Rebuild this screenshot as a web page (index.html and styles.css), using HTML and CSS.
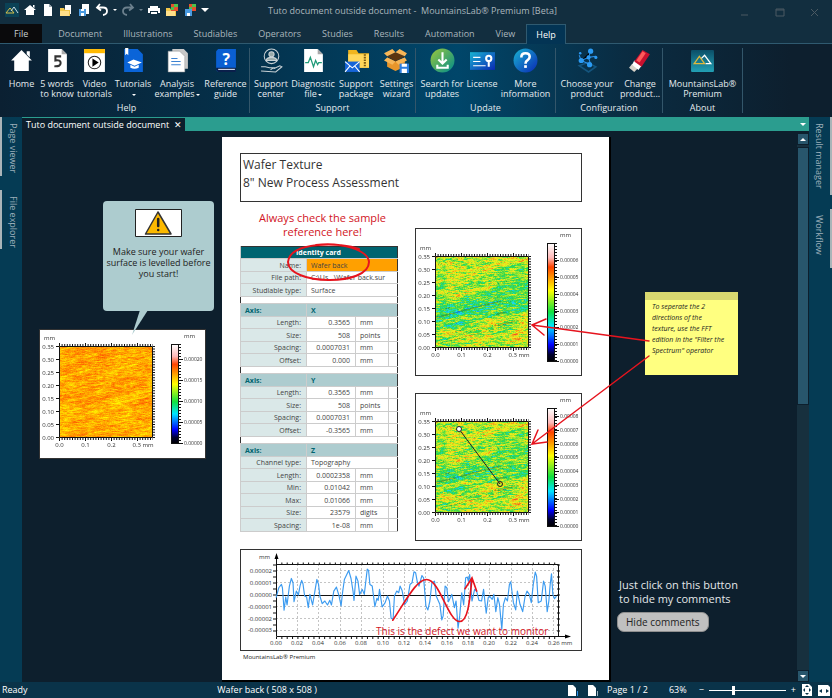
FILE: index.html
```html
<!doctype html>
<html lang="en">
<head>
	<meta charset="utf-8">
	<meta name="viewport" content="width=device-width, initial-scale=1.0">
	<title>Tuto document outside document - MountainsLab® Premium [Beta]</title>
	<link rel="stylesheet" href="styles.css">
</head>

<body>

	<svg class="defs" width="0" height="0" aria-hidden="true">
		<defs>
			<linearGradient id="scale" x1="0" y1="1" x2="0" y2="0">
				<stop offset="0" stop-color="#000"/>
				<stop offset=".06" stop-color="#000030"/>
				<stop offset=".14" stop-color="#0000ff"/>
				<stop offset=".3" stop-color="#00e5ff"/>
				<stop offset=".42" stop-color="#10e040"/>
				<stop offset=".6" stop-color="#ffff00"/>
				<stop offset=".8" stop-color="#ff4400"/>
				<stop offset=".88" stop-color="#ffb9b9"/>
				<stop offset="1" stop-color="#fff"/>
			</linearGradient>
			<linearGradient id="green" x1="0" y1="0" x2="1" y2="1"><stop offset="0" stop-color="#9bc83c"/><stop offset="1" stop-color="#008c8c"/></linearGradient>
			<linearGradient id="blue" x1="0" y1="0" x2="1" y2="1"><stop offset="0" stop-color="#19b4d2"/><stop offset="1" stop-color="#0a28b4"/></linearGradient>
			<linearGradient id="teal" x1="0" y1="0" x2="0" y2="1"><stop offset="0" stop-color="#0b4f68"/><stop offset="1" stop-color="#22a0b4"/></linearGradient>
		</defs>
	</svg>

	<header class="titlebar">
		<div class="quick">
			<svg class="qi" viewBox="0 0 14 14"><path fill="#0b4256" d="M0 0h14v14H0z"/><path fill="none" stroke="#d8c14a" d="M1 10l4-5 4 5z"/><path fill="none" stroke="#cfe0e6" d="M6 8l3-4 4 6"/></svg>
			<button title="Home"><svg class="qi" viewBox="0 0 14 14"><path fill="#fff" d="M7 2l6 5h-2v5H3V7H1zM10 2h1.500v3L10 4z"/></svg></button>
			<button title="New"><svg class="qi" viewBox="0 0 14 14"><path fill="#fff" d="M3 1h5l3 3v9H3z"/><path fill="#9aa7af" d="M8 1l3 3H8z"/></svg></button>
			<button title="Open"><svg class="qi" viewBox="0 0 14 14"><path fill="#fff" d="M6 2h6v9H6z"/><path fill="#f2c84b" d="M1 5h4l1 2h5v6H1z"/><path fill="#ffe08a" d="M1 8h9v5H1z"/></svg></button>
			<button title="Save"><svg class="qi" viewBox="0 0 14 14"><path fill="#fff" d="M5 1h7v10H5z"/><path fill="#4a9be0" d="M2 6h7v7H2z"/><path fill="#fff" d="M4 10h3v3H4zM4 6h3v2H4z"/></svg></button>
			<button title="Undo"><svg class="qi" viewBox="0 0 14 14"><path fill="none" stroke="#fff" stroke-width="1.800" d="M5 1L2 4.500l4 3M2.500 4.500H8q4 0 4 3.500T8 12"/></svg></button>
			<i class="caret"></i>
			<button title="Redo"><svg class="qi" viewBox="0 0 14 14"><path fill="none" stroke="#6c808d" stroke-width="1.800" d="M9 1l3 3.500-4 3M11.500 4.500H6q-4 0-4 3.500t4 4"/></svg></button>
			<i class="caret dim"></i>
			<button title="Print"><svg class="qi" viewBox="0 0 14 14"><path fill="#fff" d="M3 3h8v2H3zM1 5h12v5h-2V8H3v2H1zM4 9h6v2H4z"/></svg></button>
			<button title="Load template"><svg class="qi" viewBox="0 0 14 14"><path fill="#f2c84b" d="M1 5h4l1 2h5v6H1z"/><path fill="#e7502c" d="M6 1h7v7H6z"/><path fill="#4fc24a" d="M9 1h4v3H9zM6 4h3v3H6z"/><path fill="#ffe08a" d="M1 8h9v5H1z"/></svg></button>
			<button title="Save template"><svg class="qi" viewBox="0 0 14 14"><path fill="#e7502c" d="M6 1h7v7H6z"/><path fill="#4fc24a" d="M9 1h4v3H9zM6 4h3v3H6z"/><path fill="#4a9be0" d="M2 6h7v7H2z"/><path fill="#fff" d="M4 10h3v3H4z"/></svg></button>
			<i class="caret more"></i>
		</div>
		<div class="caption">Tuto document outside document -&nbsp; MountainsLab® Premium [Beta]</div>
		<div class="winbtns">
			<button title="Minimize"><svg viewBox="0 0 10 10"><path d="M1 8h7"/></svg></button>
			<button title="Maximize"><svg viewBox="0 0 10 10"><path d="M1 2h8v7H1zM1 3h8"/></svg></button>
			<button title="Close"><svg viewBox="0 0 10 10"><path d="M1 2l7 7M8 2L1 9"/></svg></button>
		</div>
	</header>

	<nav class="menu">
		<a href="#" class="file">File</a>
		<a href="#">Document</a>
		<a href="#">Illustrations</a>
		<a href="#">Studiables</a>
		<a href="#">Operators</a>
		<a href="#">Studies</a>
		<a href="#">Results</a>
		<a href="#">Automation</a>
		<a href="#">View</a>
		<a href="#" class="active">Help</a>
	</nav>

	<div class="ribbon">
		<section class="group g-help">
			<div class="tools">
				<button><svg viewBox="0 0 24 24"><path fill="#fff" d="M12 2l10 10h-3v10H5V12H2zM17 3h3v6l-3-3z"/></svg><span>Home</span></button>
				<button><svg viewBox="0 0 24 24"><path fill="#fff" d="M3 1h13l5 5v17H3z"/><path fill="#a9a9a9" d="M16 1l5 5h-5z"/><path fill="none" stroke="#333" stroke-width="2" d="M15.500 8H10v4q5-1 5 2.500T9 17.500"/></svg><span>5 words<br>to know</span></button>
				<button><svg viewBox="0 0 24 24"><path fill="#fff" d="M2 1h20v22H2z"/><path fill="#ffb900" d="M2 1h20v4H2z"/><circle cx="12" cy="14" r="6" fill="none" stroke="#222"/><path d="M10 10l6 4-6 4z"/></svg><span>Video<br>tutorials</span></button>
				<button><svg viewBox="0 0 24 24"><path fill="#0a64d8" d="M3 1h13l5 5v17H3z"/><path fill="#fff" d="M4 0h3v7l-1.500-1.500L4 7zM6 14l6-3 8 3-7 3zM9 16l4 2 4-2v3q-4 2-8 0z"/></svg><span>Tutorials<br><i class="caret"></i></span></button>
				<button><svg viewBox="0 0 24 24"><path fill="#c8c8c8" d="M7 1h11l4 4v15H7z"/><path fill="#fff" stroke="#999" stroke-width=".5" d="M3 3h11l5 5v15H3z"/><path stroke="#3c82d2" d="M6 10h6M6 13h9M6 16h9"/></svg><span>Analysis<br>examples<i class="caret"></i></span></button>
				<button><svg viewBox="0 0 24 24"><path fill="#0a5fd2" d="M5 1h17v22H5l-2-2V3z"/><path fill="#0a1f4a" d="M3 19h19v4H5l-2-2z"/><path fill="#e8f0ff" d="M5 20h16v1H5z"/><text x="9" y="16" font-size="15" font-weight="700" fill="#fff">?</text></svg><span>Reference<br>guide</span></button>
			</div>
			<h2>Help</h2>
		</section>
		<section class="group g-support">
			<div class="tools">
				<button><svg viewBox="0 0 24 24"><g fill="none" stroke="#c9d2d6"><circle cx="12" cy="8" r="7"/><circle cx="12" cy="6" r="2.500" fill="#9aa"/><path fill="#9aa" d="M7 12q0-3 5-3t5 3z"/><path d="M2 18h4l4 1h4l-3 2M14 20l6-3 2 1-6 5-14-1"/></g></svg><span>Support<br>center</span></button>
				<button><svg viewBox="0 0 24 24"><path fill="#fff" d="M3 1h13l5 5v17H3z"/><path fill="#a9a9a9" d="M16 1l5 5h-5z"/><path fill="none" stroke="#1f9a78" stroke-width="1.200" d="M4 14h3l2-5 3 9 2-6 2 4 1-2h3"/></svg><span>Diagnostic<br>file<i class="caret"></i></span></button>
				<button><svg viewBox="0 0 24 24"><path fill="#f0b51e" d="M4 2h8l2 3h10v14H4z"/><path fill="#ffd75a" d="M4 6h20v13H4z"/><path stroke="#7a5a10" stroke-width="2" stroke-dasharray="1.500 1" d="M20 6v12"/><path fill="#1665d8" d="M1 13h14v10H1z"/><path fill="none" stroke="#fff" d="M1 13l7 6 7-6M1 23l5-6M15 23l-5-6"/></svg><span>Support<br>package</span></button>
				<button><svg viewBox="0 0 24 24"><path fill="#e9962b" d="M3 9l8 4v9l-8-4zM11 13l9-4v9l-9 4z"/><path fill="#5a3510" d="M3 8l8-4 9 4-9 5z"/><path fill="#f7b657" d="M3 8L0 5l8-4 3 3zM20 8l2-3-7-4-4 3zM3 9l8 4-3 3-8-4zM20 9l-9 4 3 3 8-4z"/><path fill="#2a7de0" d="M15 15h9v9h-9z"/><path fill="#fff" d="M17 15h5v3h-5zM17 20h5v4h-5z"/></svg><span>Settings<br>wizard</span></button>
			</div>
			<h2>Support</h2>
		</section>
		<section class="group g-update">
			<div class="tools">
				<button><svg viewBox="0 0 24 24"><circle cx="12" cy="12" r="11.500" fill="url(#green)"/><path fill="none" stroke="#fff" stroke-width="2" d="M12 4v11M8 11l4 4 4-4M7 16v3h10v-3"/></svg><span>Search for<br>updates</span></button>
				<button><svg viewBox="0 0 24 24"><path fill="url(#blue)" d="M0 4h24v17H0z"/><path stroke="#fff" d="M3 9h7M3 13h7M3 17h12"/><g fill="none" stroke="#fff" stroke-width="2"><circle cx="18" cy="10" r="2.500"/><path d="M18 12v6"/></g></svg><span>License</span></button>
				<button><svg viewBox="0 0 24 24"><circle cx="12" cy="12" r="11.500" fill="url(#blue)"/><path fill="none" stroke="#fff" stroke-width="2.500" d="M8 9q0-4 4-4t4 3.500q0 2-2 3.200t-2 3.300"/><path fill="#fff" d="M10.700 16.500h2.600v2.600h-2.600z"/></svg><span>More<br>information</span></button>
			</div>
			<h2>Update</h2>
		</section>
		<section class="group g-config">
			<div class="tools">
				<button><svg viewBox="0 0 24 24"><path fill="none" stroke="#14557e" stroke-width="1.500" d="M4 17l8-3 8 4-7 5z"/><path stroke="#2b8fe8" d="M6 12l7-3 2-6M13 9l7-1M13 9l2 7M6 12L4 7M6 12l9 4"/><g fill="#2b9bf4"><circle cx="6" cy="12" r="2.500"/><circle cx="15" cy="3" r="2.500"/><circle cx="13" cy="9" r="2"/><circle cx="20" cy="9" r="1.500"/><circle cx="14" cy="16" r="2.500"/><circle cx="5" cy="5" r="1.200"/></g></svg><span>Choose your<br>product</span></button>
				<button><svg viewBox="0 0 24 24"><path fill="#d7d2c8" d="M4 15l6 4-4 4-5-4z"/><path fill="#fff" d="M6 12l7 5-3 4-6-5z"/><path fill="#c8102e" d="M14 2l7 4-8 12-7-5z"/><path fill="#ff5a5a" d="M14 3l3 2-6 9-3-2z"/></svg><span>Change<br>product...</span></button>
			</div>
			<h2>Configuration</h2>
		</section>
		<section class="group g-about">
			<div class="tools">
				<button><svg viewBox="0 0 24 24"><rect x="1" y="2" width="22" height="21" rx="1" fill="url(#teal)"/><path fill="none" stroke="#e0b93c" stroke-width="1.200" d="M4 15l5-7 5 7z"/><path fill="none" stroke="#fff" stroke-width="1.200" d="M11 10l3-3 6 8h-5"/></svg><span>MountainsLab®<br>Premium</span></button>
			</div>
			<h2>About</h2>
		</section>
	</div>

	<div class="workspace">
		<aside class="dock left">
			<button>Page viewer</button>
			<button>File explorer</button>
		</aside>

		<main class="center">
			<div class="doctabs">
				<div class="doctab">Tuto document outside document <button title="Close tab">✕</button></div>
				<i class="caret"></i>
			</div>
			<div class="stage">
				<div class="paper">
					<div class="title-box">Wafer Texture<br>8" New Process Assessment</div>

					<div class="columns">
						<div class="identity">
							<p class="remark">Always check the sample<br>reference here!</p>
							<table>
								<colgroup><col class="c-label"><col class="c-value"><col class="c-unit"><col></colgroup>
								<tr class="head"><th colspan="4">Identity card</th></tr>
								<tr class="name"><th>Name:</th><td colspan="3">Wafer back</td></tr>
								<tr><th>File path:</th><td colspan="3">C:\Us...\Wafer back.sur</td></tr>
								<tr><th>Studiable type:</th><td colspan="3">Surface</td></tr>
								<tr class="gap"><td colspan="4"></td></tr>
								<tr class="axis"><th>Axis:</th><td colspan="3">X</td></tr>
								<tr><th>Length:</th><td class="num">0.3565</td><td>mm</td><td></td></tr>
								<tr><th>Size:</th><td class="num">508</td><td>points</td><td></td></tr>
								<tr><th>Spacing:</th><td class="num">0.0007031</td><td>mm</td><td></td></tr>
								<tr><th>Offset:</th><td class="num">0.000</td><td>mm</td><td></td></tr>
								<tr class="gap"><td colspan="4"></td></tr>
								<tr class="axis"><th>Axis:</th><td colspan="3">Y</td></tr>
								<tr><th>Length:</th><td class="num">0.3565</td><td>mm</td><td></td></tr>
								<tr><th>Size:</th><td class="num">508</td><td>points</td><td></td></tr>
								<tr><th>Spacing:</th><td class="num">0.0007031</td><td>mm</td><td></td></tr>
								<tr><th>Offset:</th><td class="num">-0.3565</td><td>mm</td><td></td></tr>
								<tr class="gap"><td colspan="4"></td></tr>
								<tr class="axis"><th>Axis:</th><td colspan="3">Z</td></tr>
								<tr><th>Channel type:</th><td colspan="3">Topography</td></tr>
								<tr><th>Length:</th><td class="num">0.0002358</td><td>mm</td><td></td></tr>
								<tr><th>Min:</th><td class="num">0.01042</td><td>mm</td><td></td></tr>
								<tr><th>Max:</th><td class="num">0.01066</td><td>mm</td><td></td></tr>
								<tr><th>Size:</th><td class="num">23579</td><td>digits</td><td></td></tr>
								<tr><th>Spacing:</th><td class="num">1e-08</td><td>mm</td><td></td></tr>
							</table>
						</div>

						<div class="maps">
							<figure class="map">
								<canvas width="93" height="92" data-base="0.54" data-band="0.13" data-seed="7"></canvas>
								<svg viewBox="0 0 165 146" data-ticks="0.00000 0.00001 0.00002 0.00003 0.00004 0.00005 0.00006" data-top="31"></svg>
							</figure>
							<figure class="map">
								<canvas width="93" height="92" data-base="0.54" data-band="0.09" data-seed="7"></canvas>
								<svg viewBox="0 0 165 146" data-ticks="0.00000 0.00001 0.00002 0.00003 0.00004 0.00005 0.00006 0.00007 0.00008" data-top="22">
									<path stroke="#222" d="M43 35l41 55"/>
									<circle cx="43" cy="35" r="2.500" fill="#fff" stroke="#222"/>
									<circle cx="84" cy="90" r="2.500" fill="none" stroke="#222"/>
								</svg>
							</figure>
						</div>
					</div>

					<figure class="profile">
						<svg viewBox="0 0 340 100">
							<g stroke="#c4c4c4" stroke-dasharray="2 2">
								<path d="M35 20.500h282M35 32.500h282M35 56.500h282M35 68.500h282M35 80.500h282"/>
								<path d="M56.500 14v72M77.500 14v72M99.500 14v72M120.500 14v72M142.500 14v72M163.500 14v72M184.500 14v72M206.500 14v72M227.500 14v72M248.500 14v72M270.500 14v72M291.500 14v72M312.500 14v72"/>
							</g>
							<path stroke="#111" stroke-width="2" stroke-dasharray="1 4.350" d="M35 13.500h282M35 88h282"/>
							<path stroke="#111" stroke-width="3" stroke-dasharray="1 5" d="M317.500 14.500v72M33.500 14.500v72"/>
							<path fill="none" stroke="#111" d="M35.500 8v78.500H325M35 14.500h282.500v72M35 45.500h283"/>
							<path d="M35.500 3l2 6h-4zM330 86.500l-6-2v4z"/>
							<svg width="342" height="102" viewBox="30 27 1026 306">
								<polyline fill="none" stroke="#3c9bf0" stroke-width="3.500" stroke-linejoin="round" points="136,170 144,140 152,130 155,140 160,208 165,168 169,192 176,135 182,112 187,125 190,182 197,150 203,162 208,135 213,118 217,128 222,165 228,168 233,200 238,160 246,192 253,150 259,115 264,130 268,165 275,188 283,180 291,192 298,178 303,192 310,150 318,138 326,165 332,195 337,150 342,115 355,88 362,112 368,150 371,178 377,105 383,120 388,160 396,145 402,160 411,84 415,88 419,130 426,135 434,197 440,172 444,178 448,145 456,198 465,185 472,165 478,180 483,232 489,235 493,165 500,150 506,155 510,135 516,148 524,190 532,180 540,130 546,125 552,92 557,95 562,122 567,135 576,103 581,110 588,195 594,207 600,180 606,125 614,120 619,165 630,190 636,237 640,225 646,135 651,140 656,182 666,160 674,200 679,180 685,262 690,225 696,155 702,192 708,110 713,108 716,120 720,100 727,180 735,145 741,150 748,178 756,180 762,145 770,217 776,170 780,165 788,175 793,160 799,212 805,170 810,190 817,265 822,190 828,170 834,180 840,130 844,122 852,185 859,207 864,150 872,190 880,212 887,168 893,150 900,160 906,185 912,130 918,93 922,105 927,185 936,180 943,120 948,135 954,212 959,180 963,130 967,98 971,160 976,173 982,165"/>
								<g class="red"><path d="M488 238C530 175 560 115 590 115C630 115 655 242 690 242C715 242 720 180 727 112M706 143l21-33 14 40" stroke-width="5"/></g>
							</svg>
							<g class="tick" text-anchor="end">
								<text x="29" y="9">mm</text>
								<text x="31" y="23">0.00002</text><text x="31" y="35">0.00001</text><text x="31" y="47">0.00000</text>
								<text x="31" y="59">-0.00001</text><text x="31" y="71">-0.00002</text><text x="31" y="82">-0.00003</text>
							</g>
							<g class="tick" text-anchor="middle">
								<text x="35" y="95">0.00</text><text x="56" y="95">0.02</text><text x="77" y="95">0.04</text><text x="99" y="95">0.06</text>
								<text x="120" y="95">0.08</text><text x="142" y="95">0.10</text><text x="163" y="95">0.12</text><text x="184" y="95">0.14</text>
								<text x="206" y="95">0.16</text><text x="227" y="95">0.18</text><text x="248" y="95">0.20</text><text x="270" y="95">0.22</text>
								<text x="291" y="95">0.24</text><text x="319" y="95">0.26 mm</text>
							</g>
							<text class="defect" x="135" y="85">This is the defect we want to monitor</text>
						</svg>
					</figure>
					<footer>MountainsLab® Premium</footer>

					<!-- comments pinned around the page -->
					<figure class="map side">
						<canvas width="93" height="92" data-base="0.69" data-band="0" data-seed="3"></canvas>
						<svg viewBox="0 0 165 128" data-ticks="0.00000 0.00005 0.00010 0.00015 0.00020" data-top="29"></svg>
					</figure>
					<div class="bubble">
						<svg viewBox="0 0 47 28"><path fill="#fff" stroke="#222" d="M.5.500h46v27H.500z"/><path fill="#fcb900" stroke="#333" stroke-width="1.500" stroke-linejoin="round" d="M23 3L10.500 25h25.500z"/><path stroke="#222" stroke-width="2.500" stroke-linecap="round" d="M23.200 10v7M23.200 21v.100"/></svg>
						<p>Make sure your wafer surface is levelled before you start!</p>
						<svg class="tail" viewBox="0 0 18 26"><path fill="#adcccf" d="M9 0h8L1 25z"/></svg>
					</div>
					<div class="note"><p>To seperate the 2<br>directions of the<br>texture, use the FFT<br>edition in the "Filter the<br>Spectrum" operator</p></div>
					<div class="hide">
						<p>Just click on this button<br>to hide my comments</p>
						<button>Hide comments</button>
					</div>
					<svg class="ink red" viewBox="0 0 387 543" aria-hidden="true">
						<path stroke-width="2" d="M137 112C120 105 68 104 66 125C66 148 147 150 147 125C146 113 120 105 94 108"/>
						<path d="M427 204L310 188M324 182l-14 6 12 10"/>
						<path d="M427 219L310 307M316 293l-6 14 15-2"/>
					</svg>
				</div>
				<div class="scrollbar">
					<button title="Scroll up"><i class="caret up"></i></button>
					<div class="thumb"></div>
					<button title="Scroll down"><i class="caret"></i></button>
				</div>
			</div>
		</main>

		<aside class="dock right">
			<button>Result manager</button>
			<button>Workflow</button>
		</aside>
	</div>

	<div class="status">
		<span>Ready</span>
		<span>Wafer back ( 508 x 508 )</span>
		<div class="pager">
			<button title="Previous page"><svg viewBox="0 0 12 12"><path fill="#fff" d="M1 1h5l3 3v8H1z"/><path stroke="#2b8fe8" d="M10.500 7v5"/></svg></button>
			<button title="Next page"><svg viewBox="0 0 12 12"><path fill="#fff" d="M1 1h5l3 3v8H1z"/><path stroke="#9fb4c0" d="M10.500 7v5"/></svg></button>
			<span>Page 1 / 2</span>
		</div>
		<div class="zoom">
			<label for="zoom">63%</label>
			<button title="Zoom out">−</button>
			<input type="range" id="zoom" min="0" max="100" value="31">
			<button title="Zoom in">+</button>
			<button title="Fit page"><svg viewBox="0 0 12 12"><path fill="#fff" d="M1 0h7l3 3v9H1z"/><path fill="#0a3349" d="M6 1l2 2H4zM6 11l2-2H4zM2 6l2-2v4zM10 6L8 4v4z"/></svg></button>
			<button title="Fit width"><svg viewBox="0 0 12 12"><path fill="#fff" d="M0 1h10l2 2v9H0z"/><path fill="#0a3349" d="M1 7l3-2v4zM11 7L8 5v4z"/></svg></button>
		</div>
	</div>

<script src="script.js"></script>
</body>
</html>
```
FILE: styles.css
```css
* {
	box-sizing: border-box;
}
body {
	margin: 0;
	min-height: 100vh;
	display: flex;
	flex-direction: column;
	background: #0d1f2d;
	font: 9px/10px "Open Sans", "Noto Sans", sans-serif;
	color: #fff;
	overflow-x: hidden;
}
button {
	font: inherit;
	color: inherit;
	background: none;
	border: 0;
	padding: 0;
}
svg {
	display: block;
}
p, h2, figure {
	margin: 0;
}
.defs {
	position: absolute;
}
.caret {
	display: inline-block;
	border: 2px solid transparent;
	border-top-color: #fff;
	border-bottom: 0;
	vertical-align: middle;
	margin-left: 1px;
}
.caret.dim {
	border-top-color: #6c808d;
}
.caret.up {
	transform: rotate(180deg);
}

/* title bar */
.titlebar {
	height: 24px;
	display: grid;
	grid-template-columns: 1fr auto 1fr;
	align-items: center;
	background: #122e3f;
	padding: 0 12px 4px 5px;
}
.quick {
	display: flex;
	align-items: center;
	gap: 4px;
}
.quick .caret {
	margin: 0;
}
.quick .more {
	border-width: 4px;
	border-bottom: 0;
}
.qi {
	width: 14px;
	height: 14px;
}
.caption {
	color: #aab6bd;
	white-space: nowrap;
	padding-top: 2px;
}
.winbtns {
	display: flex;
	justify-content: flex-end;
	gap: 25px;
	padding-top: 4px;
}
.winbtns svg {
	width: 10px;
	height: 10px;
	fill: none;
	stroke: #4b5962;
}

/* ribbon tabs */
.menu {
	height: 20px;
	display: flex;
	background: #122e3f;
	border-bottom: 1px solid #2f5a70;
}
.menu a {
	padding: 0 11px 0 10px;
	line-height: 20px;
	color: #aab6bd;
	text-decoration: none;
}
.menu .file {
	padding: 0 14px;
	margin-right: 6px;
	background: #0a0a0c;
	color: #c9d0d4;
}
.menu .active {
	height: 20px;
	padding: 0 9px;
	background: #033454;
	color: #fff;
	border: 1px solid #2f5a70;
	border-bottom: 0;
	line-height: 19px;
}

.ribbon {
	height: 73px;
	display: flex;
	padding: 4px 0 4px 4px;
	background: linear-gradient(90deg, #0b2032 0%, #04304a 28%, #00466a 55%, #0a2c42 75%, #0d1f2e 95%);
}
.group {
	display: flex;
	flex-direction: column;
	justify-content: space-between;
	border-right: 1px solid #33566a;
	color: #e4eaee;
}
.tools {
	display: grid;
}
.g-help .tools { grid-template-columns: 35px 36px 39px 38px 50px 47px; }
.g-support .tools { grid-template-columns: 42px 42px 44px 37px; }
.g-update .tools { grid-template-columns: 52px 28px 59px; }
.g-config .tools { grid-template-columns: 62px 44px; }
.g-about .tools { grid-template-columns: 79px; }
.tools button {
	display: flex;
	flex-direction: column;
	align-items: center;
	gap: 6px;
	min-width: 0;
	white-space: nowrap;
}
.tools svg {
	width: 25px;
	height: 25px;
}
.group h2 {
	font: inherit;
	text-align: center;
}

/* docked panels and the document area */
.workspace {
	flex: 1;
	display: flex;
}
.dock {
	width: 23px;
	background: #053b54;
	display: flex;
	flex-direction: column;
	align-items: stretch;
	gap: 14px;
}
.dock.left {
	width: 22px;
}
.dock button {
	writing-mode: vertical-rl;
	border-left: 2px solid #a9b4b8;
	padding: 6px 3px 0 4px;
	min-height: 59px;
	line-height: 12px;
	text-align: left;
	color: #9db0bb;
}
.dock.right button {
	border-left: 0;
	border-right: 2px solid #a9b4b8;
	padding: 6px 4px 6px 3px;
}
.center {
	flex: 1;
	min-width: 0;
	display: flex;
	flex-direction: column;
}
.doctabs {
	height: 14px;
	display: flex;
	justify-content: space-between;
	align-items: center;
	background: #2b9d8f;
	padding-right: 3px;
}
.doctabs > .caret {
	border-width: 3px;
	border-bottom: 0;
}
.doctab {
	background: #0d1f2d;
	height: 14px;
	line-height: 13px;
	padding: 0 3px 0 4px;
	border-top: 1px solid #2b9d8f;
}
.doctab button {
	margin-left: 3px;
}
.stage {
	flex: 1;
	position: relative;
	background: #0d1f2d;
	padding: 6px 0 2px;
}
.scrollbar {
	position: absolute;
	top: 2px;
	right: 0;
	bottom: 0;
	width: 12px;
	display: flex;
	flex-direction: column;
	background: #17303e;
}
.scrollbar button {
	height: 12px;
	background: #28566c;
	border: 1px solid #0d1f2d;
	display: flex;
	align-items: center;
	justify-content: center;
}
.scrollbar .caret {
	margin: 0;
	border-width: 3px;
	border-bottom: 0;
}
.thumb {
	height: 47%;
	margin: 2px 0 auto;
	background: #28566c;
	border: 1px solid #0d1f2d;
}

/* the page */
.paper {
	position: relative;
	width: 387px;
	margin: 0 auto;
	padding: 16px 27px 16px 18px;
	background: #fff;
	color: #333;
	box-shadow: 1px 1px 0 1px #000;
}
.title-box {
	height: 49px;
	border: 1px solid #333;
	padding: 2px;
	font-size: 12px;
	line-height: 18px;
}
.columns {
	display: grid;
	grid-template-columns: 158px 167px;
	justify-content: space-between;
}
.remark {
	padding: 9px 0 7px 7px;
	height: 44px;
	font-size: 11px;
	line-height: 14px;
	text-align: center;
	color: #d2141e;
}
.identity table {
	width: 100%;
	table-layout: fixed;
	border-collapse: collapse;
	border: 1px solid #333;
	font-size: 7px;
	line-height: 9px;
	color: #444;
}
.c-label {
	width: 66px;
}
.c-value {
	width: 49px;
}
.c-unit {
	width: 33px;
}
.identity tr {
	height: 12px;
}
.identity tr:nth-child(even) {
	height: 13px;
}
.identity th, .identity td {
	padding: 0 0 0 4px;
	border: 0 solid #ccc;
	border-width: 0 0 1px 1px;
	white-space: nowrap;
}
.identity th {
	padding-right: 5px;
	text-align: right;
	font-weight: normal;
	background: #dae8e8;
}
.identity .head th {
	background: #006470;
	color: #fff;
	text-align: center;
	font-weight: bold;
}
.identity .name td {
	background: #ffa000;
}
.identity .axis th, .identity .axis td {
	background: #adcccf;
	color: #006470;
	font-weight: bold;
	text-align: left;
}
.identity tr.gap {
	height: 7px;
}
.identity .gap td {
	line-height: 0;
	border-left-color: #333;
}
.identity .num {
	text-align: right;
	padding-right: 5px;
}
.maps {
	display: grid;
	gap: 17px;
	padding-top: 26px;
}
.map {
	display: grid;
	border: 1px solid #333;
	background: #fff;
}
.map > * {
	grid-area: 1 / 1;
}
.map canvas {
	margin: 27px 0 0 19px;
}
.map svg {
	width: 165px;
	height: 146px;
	position: relative;
}
.tick, .map text {
	font-size: 6px;
	fill: #333;
}
.map .level {
	font-size: 5px;
}
.profile {
	margin-top: 8px;
	border: 1px solid #333;
}
.profile svg {
	width: 100%;
}
.defect {
	font-size: 10px;
	fill: #d2141e;
}
.paper footer {
	padding: 3px;
	font-size: 6px;
	line-height: 7px;
	color: #222;
}
.red {
	fill: none;
	stroke: #e6141e;
	stroke-width: 1.5;
	stroke-linecap: round;
}

/* comments lying on the canvas, outside the page */
.side, .bubble, .note, .hide, .ink {
	position: absolute;
}
.side {
	left: -183px;
	top: 192px;
}
.side canvas {
	margin-top: 16px;
}
.map.side svg {
	height: 128px;
}
.bubble {
	left: -119px;
	top: 64px;
	width: 111px;
	height: 110px;
	padding: 8px 3px;
	border-radius: 4px;
	background: #adcccf;
	text-align: center;
	line-height: 11px;
	color: #222;
}
.bubble svg {
	width: 47px;
	height: 28px;
	margin: 0 auto 9px;
}
.bubble .tail {
	position: absolute;
	left: 28px;
	top: 109px;
	width: 18px;
	height: 26px;
	margin: 0;
}
.note {
	left: 423px;
	top: 155px;
	width: 93px;
	height: 83px;
	padding: 1px 4px 0 7px;
	border-top: 8px solid #d8d870;
	background: #ffff80;
	font-size: 7px;
	line-height: 11px;
	font-style: italic;
	white-space: nowrap;
	color: #222;
}
.hide {
	left: 395px;
	top: 441px;
	font-size: 11px;
	line-height: 14px;
	white-space: nowrap;
	color: #e4e8ea;
}
.hide p {
	padding-left: 2px;
}
.hide button {
	margin-top: 6px;
	height: 20px;
	padding: 0 8px;
	border: 1px solid #8f8f8f;
	border-radius: 7px;
	background: #c0c0c0;
	font-size: 10px;
	color: #222;
}
.ink {
	left: 0;
	top: 0;
	width: 100%;
	overflow: visible;
	pointer-events: none;
}

/* status bar */
.status {
	height: 16px;
	display: grid;
	grid-template-columns: 26% 1fr auto auto;
	align-items: center;
	padding: 0 2px;
	background: #0a3349;
}
.pager, .zoom {
	display: flex;
	align-items: center;
	gap: 8px;
}
.zoom {
	gap: 5px;
	padding-left: 21px;
}
.zoom label {
	margin-right: 7px;
}
.status svg {
	width: 12px;
	height: 12px;
}
.zoom input {
	appearance: none;
	width: 77px;
	height: 10px;
	margin: 0;
	background: linear-gradient(#fff, #fff) center / 100% 1px no-repeat;
}
.zoom input::-webkit-slider-thumb {
	appearance: none;
	width: 3px;
	height: 9px;
	background: #fff;
}
```
FILE: script.js
```js
// surface maps: striped noise drawn through the height palette
var palette = [
	[0, 0, 0, 0], [0.14, 0, 0, 255], [0.3, 0, 229, 255], [0.42, 16, 224, 64],
	[0.6, 255, 255, 0], [0.8, 255, 68, 0], [0.88, 255, 185, 185], [1, 255, 255, 255]
];

function colorAt(v) {
	v = Math.max(0, Math.min(1, v));
	for (var i = 1; i < palette.length; i++) {
		var a = palette[i - 1], b = palette[i];
		if (v <= b[0]) {
			var t = (v - a[0]) / (b[0] - a[0]);
			return [a[1] + (b[1] - a[1]) * t, a[2] + (b[2] - a[2]) * t, a[3] + (b[3] - a[3]) * t];
		}
	}
}

function hash(x, y, seed) {
	var n = Math.sin(x * 127.1 + y * 311.7 + seed * 74.7) * 43758.5453;
	return n - Math.floor(n);
}

function noise(x, y, seed) {
	var xi = Math.floor(x), yi = Math.floor(y), fx = x - xi, fy = y - yi;
	var top = hash(xi, yi, seed) * (1 - fx) + hash(xi + 1, yi, seed) * fx;
	var bottom = hash(xi, yi + 1, seed) * (1 - fx) + hash(xi + 1, yi + 1, seed) * fx;
	return top * (1 - fy) + bottom * fy - 0.5;
}

document.querySelectorAll(".map canvas").forEach(function(canvas) {
	var ctx = canvas.getContext("2d");
	var img = ctx.createImageData(canvas.width, canvas.height);
	var base = parseFloat(canvas.dataset.base);
	var band = parseFloat(canvas.dataset.band);
	var seed = parseInt(canvas.dataset.seed);
	var amp = band ? 1 : 0.4;

	for (var y = 0; y < canvas.height; y++) {
		for (var x = 0; x < canvas.width; x++) {
			var u = x * 0.97 - y * 0.25, w = x * 0.25 + y * 0.97;
			var v = base + amp * (noise(u / 14, w / 2, seed) * 0.12 + noise(x / 3, y, seed + 1) * 0.22
				+ noise(u / 60, w / 1.3, seed + 2) * 0.12 + noise(u / 10, w / 6, seed + 4) * 0.12 + noise(x, y, seed + 3) * 0.1);
			v -= band * Math.exp(-Math.pow((w - 62) / 14, 2));
			var c = colorAt(v);
			var dark = band && noise(u / 50, w / 1.2, seed + 5) < -0.37;
			var shade = band ? (dark ? 0.65 : 0.84) : 1;
			var lift = band ? 26 : 0;
			var i = (y * canvas.width + x) * 4;
			img.data[i] = c[0] * shade + lift;
			img.data[i + 1] = c[1] * shade + lift;
			img.data[i + 2] = c[2] * shade + lift;
			img.data[i + 3] = 255;
		}
	}
	ctx.putImageData(img, 0, 0);
});

// axes, labels and colour scale of each map
document.querySelectorAll(".map svg").forEach(function(svg) {
	var side = svg.closest(".side");
	var top = side ? 16 : 27, bottom = top + 92;
	var barTop = 14, barBottom = side ? 113 : 132;
	var out = '<path fill="none" stroke="#111" d="M19.5 ' + (top + 0.5) + 'h93v91h-93z"/>';

	out += '<path stroke="#111" stroke-width="2" stroke-dasharray="1 1.600" d="M19 ' + (top - 1) + 'h94M19 ' + (bottom + 1) + 'h94M114 ' + top + 'v92"/>';
	for (var i = 0; i < 8; i++) {
		var y = Math.round(bottom - i * 13) - 0.5;
		out += '<path stroke="#111" d="M16 ' + y + 'h3"/><text x="14" y="' + (y + 2) + '" text-anchor="end">' + (i * 0.05).toFixed(2) + '</text>';
	}
	for (i = 0; i < 4; i++) {
		var x = 19.5 + i * 26;
		out += '<path stroke="#111" d="M' + x + ' ' + bottom + 'v3M' + x + ' ' + (top - 3) + 'v3"/>';
		out += '<text x="' + (i < 3 ? x : x - 5) + '" y="' + (bottom + 9) + '" text-anchor="' + (i < 3 ? "middle" : "start") + '">' + (i * 0.1).toFixed(1) + (i < 3 ? "" : " mm") + '</text>';
	}
	out += '<text x="4" y="' + (top - 6) + '">mm</text><text x="144" y="8">mm</text>';

	var labels = svg.dataset.ticks.split(" ");
	var first = parseInt(svg.dataset.top), step = (barBottom - first) / (labels.length - 1);
	out += '<rect x="131.5" y="' + (barTop + 0.5) + '" width="7" height="' + (barBottom - barTop) + '" fill="url(#scale)" stroke="#111"/>';
	out += '<path stroke="#111" stroke-width="2" stroke-dasharray="1 2" d="M140 ' + barTop + 'v' + (barBottom - barTop) + '"/>';
	labels.forEach(function(label, n) {
		var ly = Math.round(barBottom - n * step);
		out += '<path stroke="#111" d="M139 ' + (ly + 0.5) + 'h4"/><text class="level" x="144" y="' + (ly + 2) + '">' + label + '</text>';
	});
	svg.innerHTML = out + svg.innerHTML;
});
```
